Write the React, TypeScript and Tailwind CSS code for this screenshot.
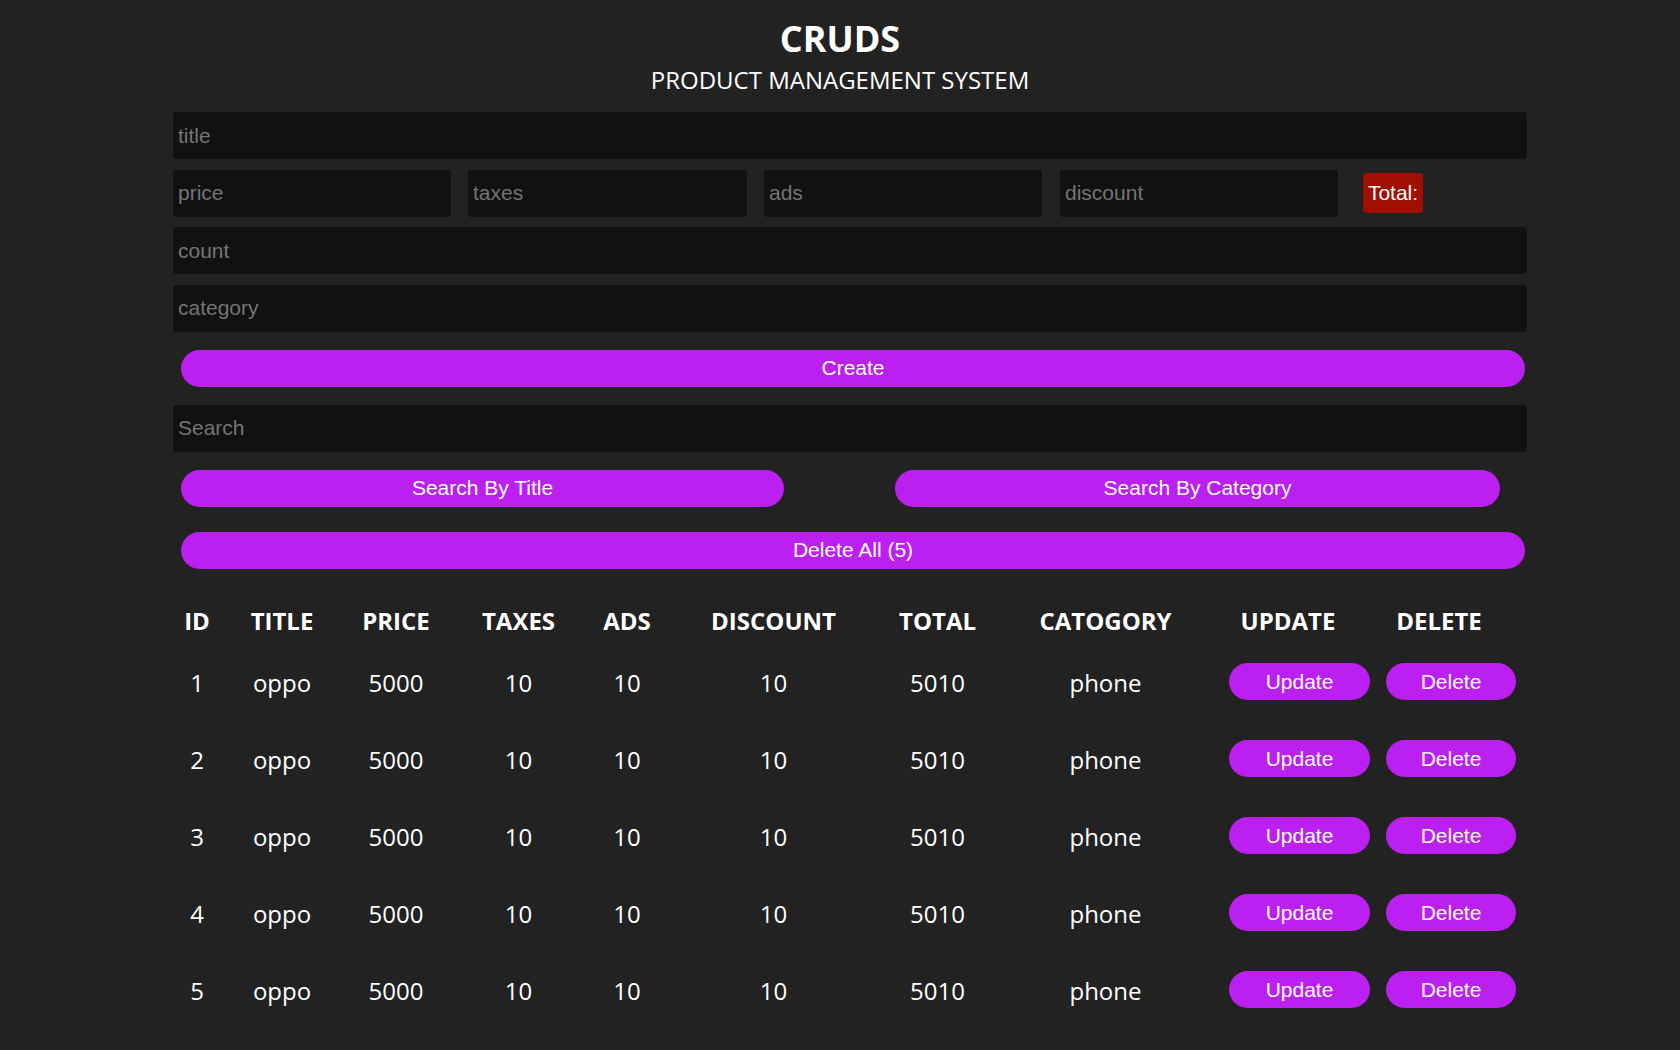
import React from "react";

const rows = [1, 2, 3, 4, 5].map((id) => ({
  id,
  title: "oppo",
  price: 5000,
  taxes: 10,
  ads: 10,
  discount: 10,
  total: 5010,
  category: "phone",
}));

const heads = ["ID", "TITLE", "PRICE", "TAXES", "ADS", "DISCOUNT", "TOTAL", "CATOGORY", "UPDATE", "DELETE"];

const cols = "grid grid-cols-[48px_122px_106px_139px_78px_215px_113px_223px_142px_160px]";

const inputCls =
  "h-[47px] rounded bg-[#111111] px-[5px] text-[21px] text-white outline-none placeholder:text-[#757575] font-['Liberation_Sans',Arial,sans-serif]";

const btnCls =
  "h-[37px] rounded-full bg-[#bb20f0] text-[21px] text-white font-['Liberation_Sans',Arial,sans-serif]";

export default function App() {
  return (
    <div className="min-h-screen bg-[#222222] pb-[30px] font-['Open_Sans',sans-serif] text-white">
      {/* header */}
      <div className="pt-[21px] text-center">
        <h1 className="text-[36px] font-bold leading-[36px]">CRUDS</h1>
        <p className="mt-[11px] text-[24px] leading-[24px]">PRODUCT MANAGEMENT SYSTEM</p>
      </div>

      <div className="ml-[173px] mt-[20px] w-[1354px]">
        {/* inputs */}
        <div className="flex flex-col gap-[10.5px]">
          <input className={`${inputCls} w-full`} placeholder="title" />
          <div className="flex items-center">
            <input className={`${inputCls} w-[278px]`} placeholder="price" />
            <input className={`${inputCls} ml-[17px] w-[279px]`} placeholder="taxes" />
            <input className={`${inputCls} ml-[17px] w-[278px]`} placeholder="ads" />
            <input className={`${inputCls} ml-[18px] w-[278px]`} placeholder="discount" />
            <span className="ml-[25px] flex h-[40px] w-[60px] items-center justify-center rounded bg-[#a10f00] text-[21px] font-['Liberation_Sans',Arial,sans-serif]">
              Total:
            </span>
          </div>
          <input className={`${inputCls} w-full`} placeholder="count" />
          <input className={`${inputCls} w-full`} placeholder="category" />
        </div>

        <button className={`${btnCls} ml-[8px] mt-[18px] w-[1344px]`}>Create</button>

        <input className={`${inputCls} mt-[18px] block w-full`} placeholder="Search" />

        <div className="mt-[18px] flex">
          <button className={`${btnCls} ml-[8px] w-[603px]`}>Search By Title</button>
          <button className={`${btnCls} ml-[111px] w-[605px]`}>Search By Category</button>
        </div>

        <button className={`${btnCls} ml-[8px] mt-[25px] block w-[1344px]`}>Delete All (5)</button>

        {/* table */}
        <div className={`${cols} mt-[28px] h-[48px] items-center text-center text-[24px] font-bold`}>
          {heads.map((h) => (
            <div key={h}>{h}</div>
          ))}
        </div>
        {rows.map((r) => (
          <div key={r.id} className={`${cols} h-[77px] items-center text-center text-[24px]`}>
            <div>{r.id}</div>
            <div>{r.title}</div>
            <div>{r.price}</div>
            <div>{r.taxes}</div>
            <div>{r.ads}</div>
            <div>{r.discount}</div>
            <div>{r.total}</div>
            <div>{r.category}</div>
            <div className="flex pl-[12px]">
              <button className={`${btnCls} -mt-[3px] w-[141px] shrink-0`}>Update</button>
            </div>
            <div className="flex pl-[27px]">
              <button className={`${btnCls} -mt-[3px] w-[130px] shrink-0`}>Delete</button>
            </div>
          </div>
        ))}
      </div>
    </div>
  );
}
